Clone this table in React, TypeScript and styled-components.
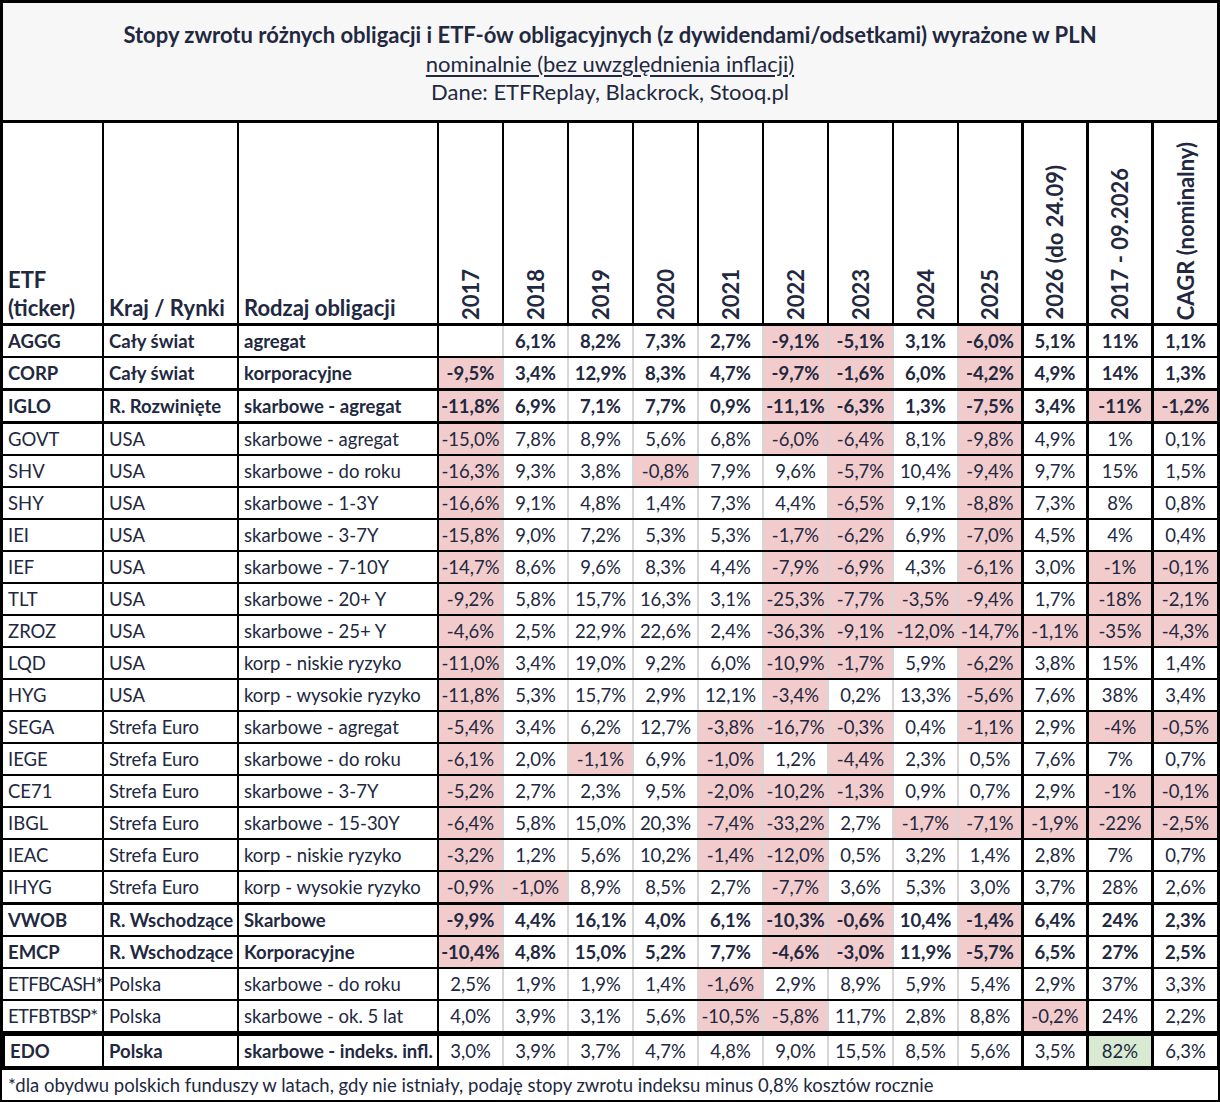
import styled, { createGlobalStyle } from "styled-components";

const GlobalStyle = createGlobalStyle`
  body {
    margin: 0;
    background: #ffffff;
    font-family: Lato, "Liberation Sans", sans-serif;
    color: #222840;
  }
`;

const PINK = "#f2cccc";
const GREEN = "#d9ead3";
const GRID = "#d6d6d6";

type Col = { w: number; b: number };

// widths incl. the right border of each cell
const COLS: Col[] = [
  { w: 101, b: 2 },
  { w: 135, b: 2 },
  { w: 200, b: 2 },
  ...Array.from({ length: 8 }, () => ({ w: 65, b: 2 })),
  { w: 65, b: 3 },
  { w: 65, b: 3 },
  { w: 65, b: 3 },
  { w: 63, b: 0 },
];

const Sheet = styled.div`
  width: 1220px;
`;

const TitleBox = styled.div`
  height: 123px;
  box-sizing: border-box;
  border: 3px solid #000;
  background: #f7f7f7;
  display: flex;
  flex-direction: column;
  align-items: center;
  padding-top: 18px;
  font-size: 22px;
  line-height: 28.5px;
`;

const Title = styled.div`
  font-weight: 700;
`;

const Subtitle = styled.div`
  text-decoration: underline;
  text-underline-offset: 3px;
`;

const Row = styled.div<{ $height: number; $bottom: number; $top?: number; $left?: number }>`
  display: grid;
  grid-template-columns: ${(p) =>
    COLS.map((c, i) => (i === 0 ? c.w - ((p.$left ?? 3) - 3) : c.w) + "px").join(" ")};
  height: ${(p) => p.$height}px;
  box-sizing: border-box;
  border-left: ${(p) => p.$left ?? 3}px solid #000;
  border-right: 3px solid #000;
  border-top: ${(p) => p.$top ?? 0}px solid #000;
  border-bottom: ${(p) => p.$bottom}px solid #000;
`;

const HeadCell = styled.div<{ $b: number }>`
  box-sizing: border-box;
  border-right: ${(p) => p.$b}px solid #000;
  display: flex;
  align-items: flex-end;
  font-weight: 700;
  font-size: 22px;
  line-height: 28px;
`;

const HeadLabel = styled.div`
  padding: 0 0 1px 5px;
  white-space: nowrap;
`;

const HeadVertical = styled(HeadCell)`
  justify-content: center;
  padding-bottom: 3px;
`;

const Rotated = styled.div`
  writing-mode: vertical-rl;
  transform: rotate(180deg);
  white-space: nowrap;
  line-height: 28px;
`;

const Cell = styled.div<{
  $b: number;
  $line: string;
  $bold: boolean;
  $num: boolean;
  $fill?: string;
  $tight?: boolean;
}>`
  box-sizing: border-box;
  border-right: ${(p) => p.$b}px solid ${(p) => p.$line};
  background: ${(p) => p.$fill ?? "transparent"};
  display: flex;
  align-items: center;
  justify-content: ${(p) => (p.$num ? "center" : "flex-start")};
  padding-left: ${(p) => (p.$num ? 0 : 5)}px;
  font-size: 18.5px;
  font-weight: ${(p) => (p.$bold ? 700 : 400)};
  letter-spacing: ${(p) => (p.$tight ? "-0.7px" : "normal")};
  white-space: nowrap;
`;

const Footnote = styled.div`
  height: 32px;
  box-sizing: border-box;
  border: 2px solid #000;
  border-top: none;
  padding-left: 6px;
  font-size: 18.5px;
  line-height: 30px;
`;

type Fund = {
  t: string;
  k: string;
  r: string;
  v: string[];
  bold?: boolean;
  h: number;
  bb: number;
};

const FUNDS: Fund[] = [
  { t: "AGGG", k: "Cały świat", r: "agregat", bold: true, h: 32, bb: 2, v: ["", "6,1%", "8,2%", "7,3%", "2,7%", "-9,1%", "-5,1%", "3,1%", "-6,0%", "5,1%", "11%", "1,1%"] },
  { t: "CORP", k: "Cały świat", r: "korporacyjne", bold: true, h: 33, bb: 3, v: ["-9,5%", "3,4%", "12,9%", "8,3%", "4,7%", "-9,7%", "-1,6%", "6,0%", "-4,2%", "4,9%", "14%", "1,3%"] },
  { t: "IGLO", k: "R. Rozwinięte", r: "skarbowe - agregat", bold: true, h: 33, bb: 3, v: ["-11,8%", "6,9%", "7,1%", "7,7%", "0,9%", "-11,1%", "-6,3%", "1,3%", "-7,5%", "3,4%", "-11%", "-1,2%"] },
  { t: "GOVT", k: "USA", r: "skarbowe - agregat", h: 32, bb: 2, v: ["-15,0%", "7,8%", "8,9%", "5,6%", "6,8%", "-6,0%", "-6,4%", "8,1%", "-9,8%", "4,9%", "1%", "0,1%"] },
  { t: "SHV", k: "USA", r: "skarbowe - do roku", h: 32, bb: 2, v: ["-16,3%", "9,3%", "3,8%", "-0,8%", "7,9%", "9,6%", "-5,7%", "10,4%", "-9,4%", "9,7%", "15%", "1,5%"] },
  { t: "SHY", k: "USA", r: "skarbowe - 1-3Y", h: 32, bb: 2, v: ["-16,6%", "9,1%", "4,8%", "1,4%", "7,3%", "4,4%", "-6,5%", "9,1%", "-8,8%", "7,3%", "8%", "0,8%"] },
  { t: "IEI", k: "USA", r: "skarbowe - 3-7Y", h: 32, bb: 2, v: ["-15,8%", "9,0%", "7,2%", "5,3%", "5,3%", "-1,7%", "-6,2%", "6,9%", "-7,0%", "4,5%", "4%", "0,4%"] },
  { t: "IEF", k: "USA", r: "skarbowe - 7-10Y", h: 32, bb: 2, v: ["-14,7%", "8,6%", "9,6%", "8,3%", "4,4%", "-7,9%", "-6,9%", "4,3%", "-6,1%", "3,0%", "-1%", "-0,1%"] },
  { t: "TLT", k: "USA", r: "skarbowe - 20+ Y", h: 32, bb: 2, v: ["-9,2%", "5,8%", "15,7%", "16,3%", "3,1%", "-25,3%", "-7,7%", "-3,5%", "-9,4%", "1,7%", "-18%", "-2,1%"] },
  { t: "ZROZ", k: "USA", r: "skarbowe - 25+ Y", h: 32, bb: 2, v: ["-4,6%", "2,5%", "22,9%", "22,6%", "2,4%", "-36,3%", "-9,1%", "-12,0%", "-14,7%", "-1,1%", "-35%", "-4,3%"] },
  { t: "LQD", k: "USA", r: "korp - niskie ryzyko", h: 32, bb: 2, v: ["-11,0%", "3,4%", "19,0%", "9,2%", "6,0%", "-10,9%", "-1,7%", "5,9%", "-6,2%", "3,8%", "15%", "1,4%"] },
  { t: "HYG", k: "USA", r: "korp - wysokie ryzyko", h: 32, bb: 2, v: ["-11,8%", "5,3%", "15,7%", "2,9%", "12,1%", "-3,4%", "0,2%", "13,3%", "-5,6%", "7,6%", "38%", "3,4%"] },
  { t: "SEGA", k: "Strefa Euro", r: "skarbowe - agregat", h: 32, bb: 2, v: ["-5,4%", "3,4%", "6,2%", "12,7%", "-3,8%", "-16,7%", "-0,3%", "0,4%", "-1,1%", "2,9%", "-4%", "-0,5%"] },
  { t: "IEGE", k: "Strefa Euro", r: "skarbowe - do roku", h: 32, bb: 2, v: ["-6,1%", "2,0%", "-1,1%", "6,9%", "-1,0%", "1,2%", "-4,4%", "2,3%", "0,5%", "7,6%", "7%", "0,7%"] },
  { t: "CE71", k: "Strefa Euro", r: "skarbowe - 3-7Y", h: 32, bb: 2, v: ["-5,2%", "2,7%", "2,3%", "9,5%", "-2,0%", "-10,2%", "-1,3%", "0,9%", "0,7%", "2,9%", "-1%", "-0,1%"] },
  { t: "IBGL", k: "Strefa Euro", r: "skarbowe - 15-30Y", h: 32, bb: 2, v: ["-6,4%", "5,8%", "15,0%", "20,3%", "-7,4%", "-33,2%", "2,7%", "-1,7%", "-7,1%", "-1,9%", "-22%", "-2,5%"] },
  { t: "IEAC", k: "Strefa Euro", r: "korp - niskie ryzyko", h: 32, bb: 2, v: ["-3,2%", "1,2%", "5,6%", "10,2%", "-1,4%", "-12,0%", "0,5%", "3,2%", "1,4%", "2,8%", "7%", "0,7%"] },
  { t: "IHYG", k: "Strefa Euro", r: "korp - wysokie ryzyko", h: 33, bb: 3, v: ["-0,9%", "-1,0%", "8,9%", "8,5%", "2,7%", "-7,7%", "3,6%", "5,3%", "3,0%", "3,7%", "28%", "2,6%"] },
  { t: "VWOB", k: "R. Wschodzące", r: "Skarbowe", bold: true, h: 32, bb: 2, v: ["-9,9%", "4,4%", "16,1%", "4,0%", "6,1%", "-10,3%", "-0,6%", "10,4%", "-1,4%", "6,4%", "24%", "2,3%"] },
  { t: "EMCP", k: "R. Wschodzące", r: "Korporacyjne", bold: true, h: 32, bb: 2, v: ["-10,4%", "4,8%", "15,0%", "5,2%", "7,7%", "-4,6%", "-3,0%", "11,9%", "-5,7%", "6,5%", "27%", "2,5%"] },
  { t: "ETFBCASH*", k: "Polska", r: "skarbowe - do roku", h: 32, bb: 2, v: ["2,5%", "1,9%", "1,9%", "1,4%", "-1,6%", "2,9%", "8,9%", "5,9%", "5,4%", "2,9%", "37%", "3,3%"] },
  { t: "ETFBTBSP*", k: "Polska", r: "skarbowe - ok. 5 lat", h: 32, bb: 2, v: ["4,0%", "3,9%", "3,1%", "5,6%", "-10,5%", "-5,8%", "11,7%", "2,8%", "8,8%", "-0,2%", "24%", "2,2%"] },
];

const EDO = ["3,0%", "3,9%", "3,7%", "4,7%", "4,8%", "9,0%", "15,5%", "8,5%", "5,6%", "3,5%", "82%", "6,3%"];

const HEADS = ["2017", "2018", "2019", "2020", "2021", "2022", "2023", "2024", "2025", "2026 (do 24.09)", "2017 - 09.2026", "CAGR (nominalny)"];

const lineFor = (i: number) => (i >= 3 && i <= 10 ? GRID : "#000");

const FundRow = ({ f }: { f: Fund }) => (
  <Row $height={f.h} $bottom={f.bb}>
    {[f.t, f.k, f.r].map((s, i) => (
      <Cell
        key={i}
        $b={COLS[i].b}
        $line="#000"
        $bold={!!f.bold}
        $num={false}
        $tight={i === 0 && s.length > 8}
      >
        {s}
      </Cell>
    ))}
    {f.v.map((s, j) => (
      <Cell
        key={j}
        $b={COLS[j + 3].b}
        $line={lineFor(j + 3)}
        $bold={!!f.bold}
        $num
        $fill={s.startsWith("-") ? PINK : undefined}
      >
        {s}
      </Cell>
    ))}
  </Row>
);

const App = () => {
  return (
    <Sheet>
      <GlobalStyle />
      <TitleBox>
        <Title>
          Stopy zwrotu różnych obligacji i ETF-ów obligacyjnych (z dywidendami/odsetkami) wyrażone w PLN
        </Title>
        <Subtitle>nominalnie (bez uwzględnienia inflacji)</Subtitle>
        <div>Dane: ETFReplay, Blackrock, Stooq.pl</div>
      </TitleBox>

      <Row $height={203} $bottom={3}>
        <HeadCell $b={2}>
          <HeadLabel>
            ETF
            <br />
            (ticker)
          </HeadLabel>
        </HeadCell>
        <HeadCell $b={2}>
          <HeadLabel>Kraj / Rynki</HeadLabel>
        </HeadCell>
        <HeadCell $b={2}>
          <HeadLabel>Rodzaj obligacji</HeadLabel>
        </HeadCell>
        {HEADS.map((h, j) => (
          <HeadVertical key={h} $b={COLS[j + 3].b}>
            <Rotated>{h}</Rotated>
          </HeadVertical>
        ))}
      </Row>

      {FUNDS.map((f) => (
        <FundRow key={f.t} f={f} />
      ))}

      <Row $height={37} $top={3} $bottom={4} $left={5}>
        {["EDO", "Polska", "skarbowe - indeks. infl."].map((s, i) => (
          <Cell key={i} $b={COLS[i].b} $line="#000" $bold $num={false}>
            {s}
          </Cell>
        ))}
        {EDO.map((s, j) => (
          <Cell
            key={j}
            $b={COLS[j + 3].b}
            $line={lineFor(j + 3)}
            $bold={false}
            $num
            $fill={s === "82%" ? GREEN : undefined}
          >
            {s}
          </Cell>
        ))}
      </Row>

      <Footnote>
        *dla obydwu polskich funduszy w latach, gdy nie istniały, podaję stopy zwrotu indeksu minus 0,8% kosztów rocznie
      </Footnote>
    </Sheet>
  );
};

export default App;
